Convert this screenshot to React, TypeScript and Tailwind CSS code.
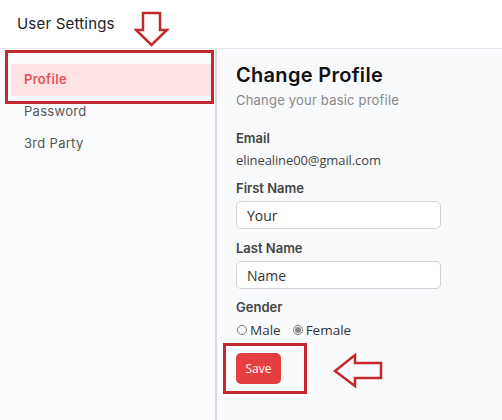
export default function App() {
  const nav = ['Profile', 'Password', '3rd Party'];

  return (
    <div className="relative w-[502px] h-[420px] overflow-hidden bg-[#f9fafc] font-['Open_Sans',sans-serif] text-[#444]">
      {/* Header */}
      <div className="h-[49px] flex items-center px-[17px] bg-white border-b border-[#e5e7eb]">
        <span className="text-[15px] text-[#222] font-['Inter',sans-serif] tracking-[0.2px]">User Settings</span>
      </div>

      <div className="flex h-[371px]">
        {/* Sidebar */}
        <div className="w-[217px] shrink-0 border-r-2 border-[#d9d9de] pt-[15px] bg-[#f9fbfc]">
          {nav.map((item, i) => (
            <div
              key={item}
              className={
                i === 0
                  ? 'ml-[11px] mr-[3px] h-[32px] flex items-center pl-[13px] bg-[#fde3e3] text-[#e05555] font-semibold text-[13px] tracking-[0.3px] font-["Inter",sans-serif]'
                  : 'ml-[11px] h-[32px] flex items-center pl-[13px] text-[#555] text-[13px] tracking-[0.3px] font-["Inter",sans-serif]'
              }
            >
              {item}
            </div>
          ))}
        </div>

        {/* Content */}
        <div className="flex-1 pl-[19px] pt-[14px] flex flex-col">
          <h1 className="text-[20px] leading-[24px] font-semibold text-[#111] tracking-[0.3px] font-['Inter',sans-serif]">Change Profile</h1>
          <p className="mt-[4px] text-[13px] leading-[18px] text-[#888] tracking-[0.2px] font-['Inter',sans-serif]">Change your basic profile</p>

          <div className="mt-[20px] text-[13px] leading-[18px] font-semibold text-[#444] font-['Inter',sans-serif]">Email</div>
          <div className="mt-[4px] text-[13px] leading-[18px] text-[#444] tracking-[-0.1px]">elinealine00@gmail.com</div>

          <label className="mt-[10px] text-[13px] leading-[18px] font-semibold text-[#444] font-['Inter',sans-serif]">First Name</label>
          <input
            defaultValue="Your"
            className="mt-[4px] w-[205px] h-[28px] rounded-[5px] border border-[#d4d4d8] bg-white px-[10px] text-[14px] text-[#333] outline-none"
          />

          <label className="mt-[10px] text-[13px] leading-[18px] font-semibold text-[#444] font-['Inter',sans-serif]">Last Name</label>
          <input
            defaultValue="Name"
            className="mt-[4px] w-[205px] h-[28px] rounded-[5px] border border-[#d4d4d8] bg-white px-[10px] text-[14px] text-[#333] outline-none"
          />

          <div className="mt-[9px] text-[13px] leading-[18px] font-semibold text-[#444] font-['Inter',sans-serif]">Gender</div>
          <div className="mt-[5px] flex items-center h-[18px] text-[13.5px] text-[#333]">
            <span className="w-[10px] h-[10px] rounded-full border border-[#777] bg-white ml-[1px]" />
            <span className="ml-[3px]">Male</span>
            <span className="ml-[12px] w-[10px] h-[10px] rounded-full border border-[#777] bg-white flex items-center justify-center">
              <span className="w-[6px] h-[6px] rounded-full bg-[#888]" />
            </span>
            <span className="ml-[3px]">Female</span>
          </div>

          <button className="mt-[14px] w-[45px] h-[31px] rounded-[5px] bg-[#e53e3e] text-white text-[12px]">Save</button>
        </div>
      </div>

      {/* Annotations */}
      <div className="absolute left-[5px] top-[50px] w-[209px] h-[54px] border-[3px] border-[#c4282e]" />
      <div className="absolute left-[223px] top-[343px] w-[84px] h-[51px] border-[3px] border-[#c4282e]" />

      <svg className="absolute left-[134px] top-[10px]" width="36" height="38" viewBox="0 0 36 38">
        <path d="M9 3 H26 V20 H33 L17.5 35 L2 20 H9 Z" fill="none" stroke="#c4282e" strokeWidth="2.5" strokeLinejoin="miter" />
      </svg>
      <svg className="absolute left-[332px] top-[352px]" width="52" height="37" viewBox="0 0 52 37">
        <path d="M3 19 L23 3 V11 H49 V26 H23 V34 Z" fill="none" stroke="#c4282e" strokeWidth="2.5" strokeLinejoin="miter" />
      </svg>
    </div>
  );
}
